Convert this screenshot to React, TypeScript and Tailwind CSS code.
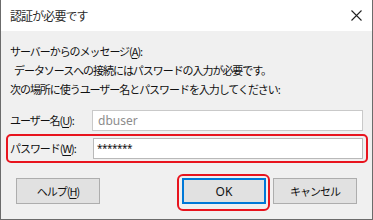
import React from "react";

const jp = { fontFamily: '"Noto Sans CJK JP", "Noto Sans", sans-serif' };
const lat = { fontFamily: '"Noto Sans", "Noto Sans CJK JP", sans-serif' };

function U({ c }: { c: string }) {
  return <span className="underline underline-offset-2">{c}</span>;
}

export default function App() {
  return (
    <div className="w-[373px] h-[220px] flex flex-col border-l border-r border-b border-[#6b6b6b] bg-[#f0f0f0] text-[#111]" style={jp}>
      <div className="h-[31px] bg-white flex items-center justify-between pl-[9px] pr-[10px] shrink-0">
        <span className="text-[12px] tracking-[-0.9px] text-[#2a2a2a]">認証が必要です</span>
        <svg width="11" height="11" viewBox="0 0 11 11">
          <path d="M0.5 0.5 L10.5 10.5 M10.5 0.5 L0.5 10.5" stroke="#222" strokeWidth="1.1" fill="none" />
        </svg>
      </div>
      <div className="flex-1 flex flex-col pt-[11px] text-[11px] tracking-[-1.05px] leading-[19px]">
        <div className="pl-[9px]">サーバーからのメッセージ(<U c="A" />):</div>
        <div className="pl-[13px]">データソースへの接続にはパスワードの入力が必要です。</div>
        <div className="pl-[9px]">次の場所に使うユーザー名とパスワードを入力してください:</div>
        <div className="mt-[11px] flex items-center pl-[9px] pr-[9px] h-[21px]">
          <span className="w-[82px]">ユーザー名(<U c="U" />):</span>
          <div className="flex-1 h-[21px] border border-[#c9c9c9] bg-white flex items-center pl-[5px] text-[12px] tracking-normal text-[#8c8c8c]" style={lat}>
            dbuser
          </div>
        </div>
        <div className="mt-[3px] ml-[5px] mr-[4px] h-[29px] border-2 border-[#e8141e] rounded-[5px] flex items-center pl-[2px] pr-[3px]">
          <span className="w-[83px]">パスワード(<U c="W" />):</span>
          <div className="flex-1 h-[21px] border border-[#b9b9b9] bg-white flex items-center pl-[3px] text-[10px] tracking-[-0.5px] text-[#111]" style={lat}>
            *******
          </div>
        </div>
        <div className="mt-[15px] flex items-center pl-[15px] pr-[15px] text-[11px]">
          <button className="w-[84px] h-[26px] bg-[#e1e1e1] border border-[#adadad] flex items-center justify-center tracking-[-1px]">
            ヘルプ(<U c="H" />)
          </button>
          <div className="flex-1" />
          <div className="relative">
            <div className="absolute -left-[5px] -right-[4px] -top-[4px] -bottom-[7px] border-2 border-[#e8141e] rounded-[6px]" />
            <button className="w-[84px] h-[26px] bg-[#e1e1e1] border-2 border-[#0078d7] flex items-center justify-center tracking-normal text-[12px]" style={lat}>
              OK
            </button>
          </div>
          <button className="ml-[7px] w-[84px] h-[26px] bg-[#e1e1e1] border border-[#adadad] flex items-center justify-center tracking-[-1px]">
            キャンセル
          </button>
        </div>
      </div>
    </div>
  );
}
